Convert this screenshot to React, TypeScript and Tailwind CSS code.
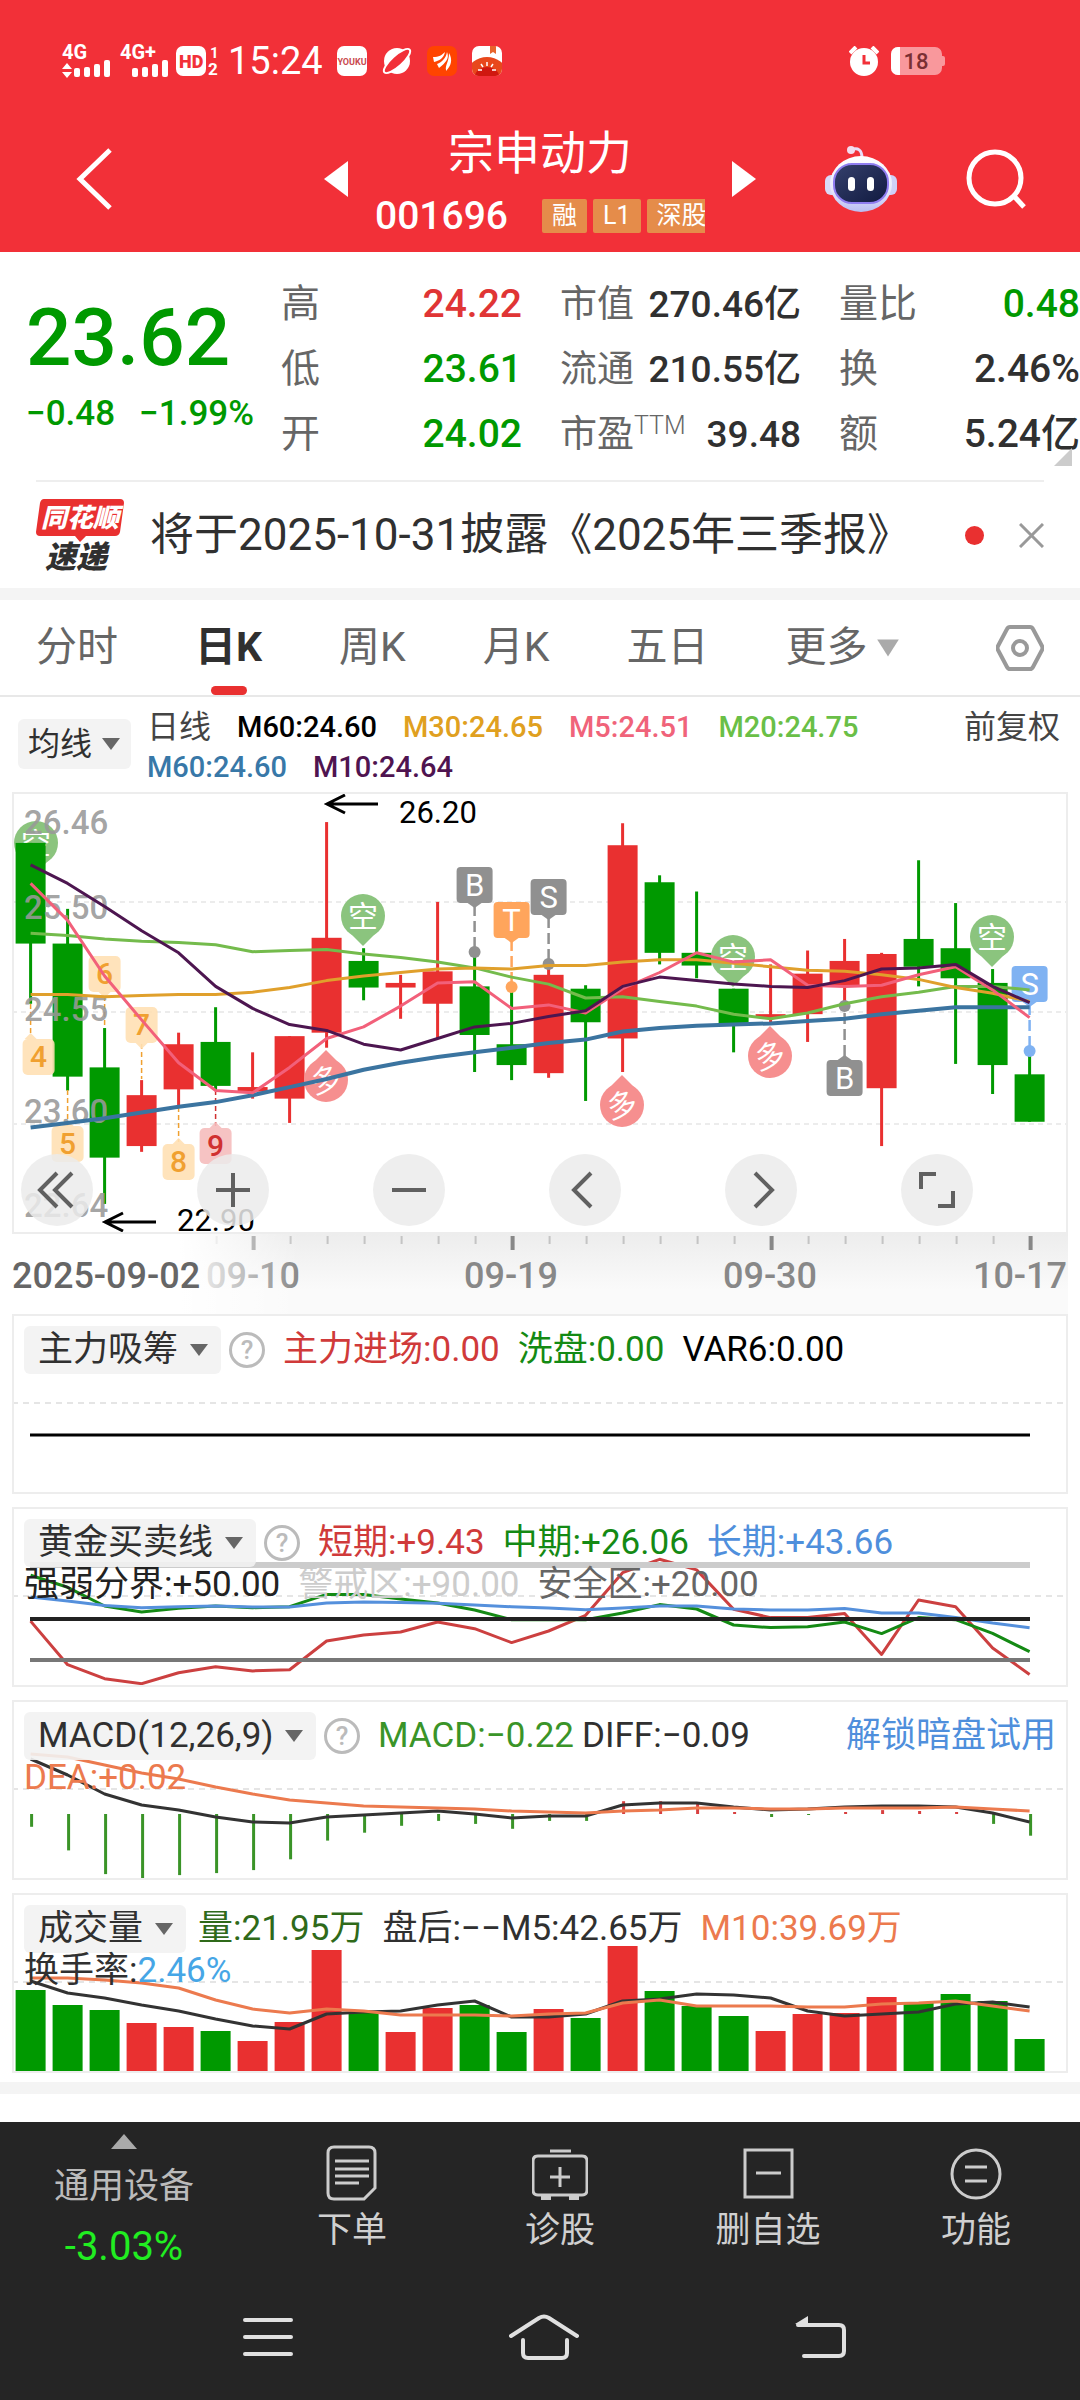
import { ReactNode, useState } from 'react'

const RED = '#e93030'
const GREEN = '#009900'

// [alta, topo do corpo, base do corpo, baixa, subiu]
type Candle = [number, number, number, number, boolean]

const candles: Candle[] = [
  [26.02, 26.02, 25.15, 24.63, false],
  [25.45, 25.15, 24.0, 23.88, false],
  [24.42, 24.08, 23.3, 22.9, false],
  [23.97, 23.84, 23.4, 23.35, true],
  [24.38, 24.28, 23.89, 23.75, true],
  [24.6, 24.3, 23.92, 23.88, false],
  [24.21, 23.91, 23.87, 23.81, true],
  [24.35, 24.35, 23.81, 23.6, true],
  [26.2, 25.2, 24.38, 24.25, true],
  [25.11, 25.0, 24.77, 24.66, false],
  [24.88, 24.81, 24.77, 24.5, true],
  [25.51, 24.91, 24.63, 24.33, true],
  [25.07, 24.78, 24.36, 24.04, false],
  [24.77, 24.28, 24.1, 23.97, false],
  [24.97, 24.88, 24.03, 23.99, true],
  [24.79, 24.76, 24.47, 23.79, false],
  [26.19, 26.0, 24.33, 24.04, true],
  [25.74, 25.68, 25.07, 24.97, false],
  [25.6, 25.07, 24.96, 24.85, false],
  [24.76, 24.76, 24.45, 24.21, false],
  [24.97, 24.54, 24.51, 24.47, true],
  [25.09, 24.89, 24.54, 24.3, true],
  [25.19, 25.0, 24.78, 24.6, true],
  [25.07, 25.06, 23.9, 23.4, true],
  [25.87, 25.19, 24.95, 24.78, false],
  [25.5, 25.11, 24.85, 24.11, false],
  [24.93, 24.81, 24.1, 23.85, false],
  [24.22, 24.02, 23.61, 23.61, false],
]

const ma5 = [25.67, 25.35, 24.87, 24.49, 24.12, 23.88, 23.86, 24.08, 24.33, 24.43, 24.61, 24.81, 24.82, 24.59, 24.62, 24.55, 24.76, 24.9, 25.07, 24.99, 25.01, 24.79, 24.78, 24.79, 24.88, 24.95, 24.75, 24.51]
const ma10 = [25.83, 25.67, 25.47, 25.26, 25.07, 24.78, 24.59, 24.45, 24.4, 24.28, 24.23, 24.33, 24.43, 24.46, 24.52, 24.57, 24.78, 24.86, 24.83, 24.8, 24.78, 24.77, 24.83, 24.93, 24.94, 24.97, 24.78, 24.64]
const ma20 = [25.24, 25.22, 25.19, 25.17, 25.16, 25.14, 25.08, 25.09, 25.1, 25.06, 25.03, 24.99, 24.94, 24.86, 24.8, 24.68, 24.69, 24.65, 24.61, 24.54, 24.5, 24.55, 24.63, 24.69, 24.73, 24.78, 24.78, 24.75]
const ma30 = [24.71, 24.71, 24.69, 24.7, 24.71, 24.71, 24.73, 24.77, 24.83, 24.87, 24.9, 24.93, 24.94, 24.93, 24.96, 24.96, 24.99, 25.01, 25.01, 24.98, 24.95, 24.92, 24.91, 24.88, 24.84, 24.77, 24.72, 24.65]
const ma60 = [23.56, 23.6, 23.64, 23.69, 23.74, 23.78, 23.84, 23.91, 23.98, 24.06, 24.12, 24.17, 24.21, 24.25, 24.29, 24.32, 24.39, 24.42, 24.44, 24.45, 24.46, 24.48, 24.5, 24.54, 24.57, 24.6, 24.6, 24.6]

const curto = [48.5, 16.6, 6.3, 2.7, 10.7, 15.1, 12, 12.9, 33.9, 38.3, 40.5, 47.8, 42.9, 32.7, 41.2, 52.7, 83.9, 93.7, 85.9, 57.1, 51, 51, 54.1, 24.1, 63.9, 59, 28.8, 9.43]
const medio = [82, 73.2, 59.5, 55.1, 57.8, 59.5, 58.3, 59, 68, 68, 64.6, 61.7, 56.6, 49.5, 49.5, 49.5, 54.4, 60.5, 57.3, 45.6, 43.7, 44.4, 47.8, 39.3, 51, 49.5, 39.5, 26.06]
const longo = [66.1, 63.2, 59.8, 58.3, 59, 59.5, 58.8, 58.8, 61.7, 62.4, 62, 61.5, 60.2, 59, 58, 56.8, 58, 59.5, 59.5, 57.3, 56.6, 56.6, 57.6, 54.4, 54.4, 51.2, 47.1, 43.66]

const macd = [-0.13, -0.37, -0.61, -0.66, -0.62, -0.6, -0.57, -0.46, -0.27, -0.19, -0.12, -0.07, -0.1, -0.15, -0.07, -0.07, 0.13, 0.13, 0.11, 0.02, -0.03, -0.01, 0.02, 0.04, 0.03, 0.02, -0.1, -0.22]
const diff = [59, 75, 94, 105, 110, 117, 122, 123, 117, 115, 113, 111, 114, 118, 116, 116, 105, 103, 103, 107, 110, 109, 107, 106, 106, 107, 113, 122]
const dea = [54, 57, 65, 73, 79, 87, 94, 100, 103, 106, 107, 108, 109, 111, 112, 113, 111, 110, 108, 108, 109, 109, 108, 108, 108, 107, 109, 111]

const volumes = [83, 68, 63, 50, 46, 42, 32, 51, 123, 61, 41, 65, 68, 41, 64, 55, 127, 82, 67, 57, 42, 59, 60, 76, 70, 79, 72, 34]
const volM5 = [88, 100, 105, 112, 118, 126, 133, 136, 121, 119, 118, 112, 108, 124, 124, 121, 108, 106, 101, 102, 105, 118, 123, 121, 119, 111, 109, 114]
const volM10 = [85, 85, 87, 90, 95, 107, 116, 120, 116, 118, 122, 122, 122, 123, 121, 120, 110, 107, 113, 113, 113, 114, 114, 111, 110, 108, 113, 118]

const px = (i: number) => 30.6 + i * 37
const priceY = (p: number) => ((26.46 - p) / 3.82) * 442
const levelY = (v: number) => 112 - (v - 50) * 1.367
const linha = (ys: number[]) => ys.map((y, i) => `${px(i)},${y.toFixed(1)}`).join(' ')

function Serie({ ys, cor, largura = 3 }: { ys: number[]; cor: string; largura?: number }) {
  return <polyline points={linha(ys)} fill="none" stroke={cor} strokeWidth={largura} strokeLinejoin="round" />
}

function Seta({ className = 'w-5 h-3.5 text-[#666]' }: { className?: string }) {
  return (
    <svg viewBox="0 0 20 14" preserveAspectRatio="none" className={`shrink-0 ${className}`} aria-hidden="true">
      <path d="M1 1h18l-9 12z" fill="currentColor" />
    </svg>
  )
}

/* ---------- barra de status ---------- */

function Sinal({ label, dados }: { label: string; dados?: boolean }) {
  return (
    <svg viewBox="0 0 48 34" className="w-12 h-[34px] overflow-visible" fill="#fff">
      <text x="0" y="15" fontSize="20" fontWeight="700">{label}</text>
      {dados && <path d="M0 25l5-6 5 6zM0 28l5 6 5-6z" />}
      <rect x="12" y="24" width="6" height="9" rx="2" />
      <rect x="22" y="23" width="6" height="10" rx="2" />
      <rect x="32" y="20" width="6" height="13" rx="2" />
      <rect x="42" y="16" width="6" height="17" rx="2" />
    </svg>
  )
}

function StatusBar() {
  return (
    <div className="h-[106px] pt-4 pl-[62px] pr-[135px] flex items-center text-white">
      <Sinal label="4G" dados />
      <div className="ml-2.5"><Sinal label="4G+" /></div>
      <svg viewBox="0 0 44 30" className="w-11 h-[30px] ml-2 overflow-visible" fill="#fff">
        <rect width="30" height="30" rx="7" />
        <text x="3" y="22" fontSize="18" fontWeight="900" fill="#f23038">HD</text>
        <text x="34" y="12" fontSize="15" fontWeight="700">1</text>
        <text x="32" y="29" fontSize="17" fontWeight="700">2</text>
      </svg>
      <span className="ml-2 text-[38px] leading-10">15:24</span>
      <svg viewBox="0 0 30 30" className="size-[30px] ml-3.5 overflow-visible">
        <rect width="30" height="30" rx="7" fill="#fff" />
        <text x="15" y="19" fontSize="9" fontWeight="700" textAnchor="middle" fill="#c94a50">YOUKU</text>
      </svg>
      <svg viewBox="0 0 30 30" className="size-[30px] ml-[15px]">
        <circle cx="15" cy="15" r="13" fill="#fff" />
        <ellipse cx="15" cy="15" rx="17" ry="5.5" transform="rotate(-42 15 15)" fill="#f23038" stroke="#fff" strokeWidth="2" />
      </svg>
      <svg viewBox="0 0 30 30" className="size-[30px] ml-[15px]">
        <rect width="30" height="30" rx="7" fill="#ff4400" />
        <path d="M6 11c6 0 9-2 12-5-1 6-6 9-11 10zM10 18c5-2 9-6 10-12 3 7-2 11-8 16zM19 24c-1-5 3-8 3-17 4 7 2 13-3 18z" fill="#fff" />
      </svg>
      <svg viewBox="0 0 30 30" className="size-[30px] ml-[15px]">
        <clipPath id="fruta"><rect width="30" height="30" rx="7" /></clipPath>
        <g clipPath="url(#fruta)">
          <rect width="30" height="30" fill="#fff" />
          <path d="M18 0h6v8l-3-2-3 2z" fill="#e8642c" />
          <ellipse cx="15" cy="26" rx="19" ry="15" fill="#e8481c" />
          <ellipse cx="15" cy="30" rx="12" ry="9" fill="#d01810" />
          <path d="M15 16v4M9 18l2 3M21 18l-2 3M6 24h4M24 24h-4" stroke="#fff" strokeWidth="1.5" />
        </g>
      </svg>
      <svg viewBox="0 0 30 30" className="size-[30px] ml-auto">
        <path d="M1 7l6-6M29 7l-6-6" stroke="#fff" strokeWidth="4" />
        <circle cx="15" cy="16" r="14" fill="#fff" />
        <path d="M15 9v8h6" fill="none" stroke="#f23038" strokeWidth="3" />
      </svg>
      <svg viewBox="0 0 54 28" className="w-[54px] h-7 ml-3">
        <path d="M7 0h37a7 7 0 0 1 7 7v2h1a2 2 0 0 1 2 2v6a2 2 0 0 1-2 2h-1v2a7 7 0 0 1-7 7H7a7 7 0 0 1-7-7V7a7 7 0 0 1 7-7z" fill="#f9989c" />
        <path d="M9 0H7a7 7 0 0 0-7 7v14a7 7 0 0 0 7 7h2z" fill="#fff" />
        <text x="25" y="22" fontSize="22" fontWeight="500" textAnchor="middle" fill="#7a2f33">18</text>
      </svg>
    </div>
  )
}

/* ---------- cabeçalho ---------- */

function Robo() {
  return (
    <svg viewBox="0 0 72 66" className="w-[72px] h-[66px]">
      <defs>
        <linearGradient id="casco" x1="0" y1="0" x2="0" y2="1">
          <stop offset="0" stopColor="#ffffff" />
          <stop offset="0.6" stopColor="#e8e8fb" />
          <stop offset="1" stopColor="#b9bdf2" />
        </linearGradient>
        <linearGradient id="visor" x1="0" y1="0" x2="1" y2="1">
          <stop offset="0" stopColor="#35406c" />
          <stop offset="1" stopColor="#111a40" />
        </linearGradient>
      </defs>
      <path d="M26 4c7-3 11 0 11 8" fill="none" stroke="#e9defa" strokeWidth="3" />
      <circle cx="26" cy="4" r="4" fill="#f3dcee" />
      <rect x="0" y="29" width="14" height="20" rx="6" fill="#d9daf8" />
      <rect x="58" y="29" width="14" height="20" rx="6" fill="#cfd0f8" />
      <ellipse cx="36" cy="38" rx="31" ry="28" fill="url(#casco)" />
      <rect x="9" y="18" width="54" height="39" rx="18" fill="url(#visor)" stroke="#8f7df0" strokeWidth="2" />
      <rect x="23" y="31" width="7" height="14" rx="3.5" fill="#fff" />
      <rect x="42" y="31" width="7" height="14" rx="3.5" fill="#fff" />
    </svg>
  )
}

function Tag({ children }: { children: ReactNode }) {
  return <span className="h-[34px] px-2.5 rounded-xs bg-[#e58c4a] text-[25px] leading-[34px] shrink-0">{children}</span>
}

function Header() {
  return (
    <header className="bg-[#f23038] text-white">
      <StatusBar />
      <div className="h-[146px] grid grid-cols-[3fr_4fr_3fr] items-center">
        <button aria-label="返回" className="pl-[75px] justify-self-start">
          <svg viewBox="0 0 38 64" className="w-[38px] h-16" fill="none" stroke="#fff" strokeWidth="5">
            <path d="M35 3L5 32l30 29" />
          </svg>
        </button>
        <div className="flex items-center justify-between">
          <button aria-label="上一只">
            <svg viewBox="0 0 24 36" className="w-6 h-9" fill="#fff"><path d="M24 0v36L0 18z" /></svg>
          </button>
          <div className="w-[330px]">
            <h1 className="text-center text-[46px] leading-[56px] mb-[18px]">宗申动力</h1>
            <div className="flex items-center gap-1.5 overflow-hidden h-[34px]">
              <span className="text-[39px] font-medium leading-[34px] mr-7">001696</span>
              <Tag>融</Tag>
              <Tag>L1</Tag>
              <Tag>深股</Tag>
            </div>
          </div>
          <button aria-label="下一只">
            <svg viewBox="0 0 24 36" className="w-6 h-9" fill="#fff"><path d="M0 0v36l24-18z" /></svg>
          </button>
        </div>
        <div className="flex items-center gap-[69px] pl-[69px]">
          <button aria-label="助手"><Robo /></button>
          <button aria-label="搜索">
            <svg viewBox="0 0 60 60" className="size-[60px]" fill="none" stroke="#fff" strokeWidth="5">
              <circle cx="29" cy="29" r="26" />
              <path d="M47 46l11 12" />
            </svg>
          </button>
        </div>
      </div>
    </header>
  )
}

/* ---------- cotação ---------- */

interface ItemProps {
  nome: ReactNode
  valor: string
  cor?: string
  tamanho?: string
}

function Item({ nome, valor, cor = 'text-[#303030]', tamanho = 'text-[39px]' }: ItemProps) {
  return (
    <div className={`flex items-center justify-between h-[65px] whitespace-nowrap ${tamanho}`}>
      <dt className="text-[#666]">{nome}</dt>
      <dd className={`font-medium ${cor}`}>{valor}</dd>
    </div>
  )
}

function Cotacao() {
  return (
    <section className="relative flex">
      <div className="w-[281px] pl-[26px] pt-[46px] text-[#009900] font-medium shrink-0">
        <p className="text-[80px] leading-[80px]">23.62</p>
        <p className="flex gap-6 text-[35px] leading-10 mt-4">
          <span>−0.48</span>
          <span>−1.99%</span>
        </p>
      </div>
      <dl className="flex-1 grid grid-cols-3 gap-x-[38px] pt-5 pb-[13px]">
        <Item nome="高" valor="24.22" cor="text-[#e03535]" />
        <Item nome="市值" valor="270.46亿" tamanho="text-[37px]" />
        <Item nome="量比" valor="0.48" cor="text-[#009900]" />
        <Item nome="低" valor="23.61" cor="text-[#009900]" />
        <Item nome="流通" valor="210.55亿" tamanho="text-[37px]" />
        <Item nome="换" valor="2.46%" />
        <Item nome="开" valor="24.02" cor="text-[#009900]" />
        <Item nome={<>市盈<sup className="text-[25px] font-light">TTM</sup></>} valor="39.48" tamanho="text-[37px]" />
        <Item nome="额" valor="5.24亿" />
      </dl>
      <svg viewBox="0 0 18 18" className="absolute right-2 bottom-3.5 size-[18px]"><path d="M18 0v18H0z" fill="#ccc" /></svg>
    </section>
  )
}

function Aviso() {
  return (
    <section className="mx-9 border-t-2 border-[#eee] h-[108px] flex items-center">
      <svg viewBox="0 0 90 72" className="w-[90px] h-[72px] overflow-visible">
        <path d="M8 0h76q4 0 4 4l-4 29q-1 4-5 4H50l-6 6-5-6H4q-4 0-4-4L4 4q1-4 4-4z" fill={RED} />
        <text x="5" y="28" fontSize="26" fontWeight="900" fontStyle="italic" fill="#fff">同花顺</text>
        <text x="9" y="69" fontSize="31" fontWeight="900" fontStyle="italic" fill="#303030">速递</text>
      </svg>
      <p className="ml-6 text-[44px] text-[#303030] whitespace-nowrap">将于2025-10-31披露《2025年三季报》</p>
      <i className="ml-auto size-[19px] rounded-full bg-[#e93030]" />
      <button aria-label="关闭" className="ml-[35px]">
        <svg viewBox="0 0 25 25" className="size-[25px]" stroke="#999" strokeWidth="3"><path d="M1 1l23 23M24 1L1 24" /></svg>
      </button>
    </section>
  )
}

const periodos = ['分时', '日K', '周K', '月K', '五日']

function Abas() {
  const [ativo, setAtivo] = useState('日K')
  return (
    <nav className="h-[97px] pl-9 pr-9 flex items-center gap-[77px] text-[41px] text-[#666] border-b-2 border-[#e8e8e8]">
      {periodos.map((p) => (
        <button
          key={p}
          onClick={() => setAtivo(p)}
          className={`relative h-full whitespace-nowrap ${ativo === p ? 'font-bold text-[#303030]' : ''}`}
        >
          {p}
          {ativo === p && (
            <i className="absolute bottom-0 left-1/2 -translate-x-1/2 w-9 h-[9px] rounded-full bg-[#e93030]" />
          )}
        </button>
      ))}
      <button className="flex items-center gap-2 whitespace-nowrap">
        更多
        <Seta className="w-6 h-5 text-[#aaa]" />
      </button>
      <button aria-label="设置" className="ml-auto">
        <svg viewBox="0 0 48 46" className="w-12 h-[46px]" fill="none" stroke="#999" strokeWidth="4">
          <path d="M14 2h20q2 0 3 2l9 17q1 2 0 4l-9 17q-1 2-3 2H14q-2 0-3-2L2 25q-1-2 0-4L11 4q1-2 3-2z" />
          <circle cx="24" cy="23" r="7" />
        </svg>
      </button>
    </nav>
  )
}

/* ---------- gráfico principal ---------- */

interface SeletorProps {
  nome: string
  className?: string
}

function Seletor({ nome, className = 'h-12 pl-3.5 pr-3 gap-2.5 text-[35px]' }: SeletorProps) {
  return (
    <label className={`flex items-center shrink-0 rounded-md bg-[#f2f2f2]/90 text-[#303030] ${className}`}>
      <select aria-label={nome} className="appearance-none bg-transparent">
        <option>{nome}</option>
      </select>
      <Seta />
    </label>
  )
}

function Medias() {
  return (
    <div className="flex items-start pl-[18px] pr-5 pt-2.5 pb-[5px]">
      <Seletor nome="均线" className="h-[50px] mt-3 px-2.5 gap-2 text-[32px]" />
      <div className="flex-1 ml-4 flex flex-wrap gap-x-[26px] text-[29px] leading-10 font-medium">
        <span className="text-[32px] font-normal text-[#444]">日线</span>
        <span className="text-black">M60:24.60</span>
        <span className="text-[#e0a020]">M30:24.65</span>
        <span className="text-[#f0637a]">M5:24.51</span>
        <span className="text-[#6abf47]">M20:24.75</span>
        <span className="basis-full h-0" />
        <span className="text-[#3878a8]">M60:24.60</span>
        <span className="text-[#4f1450]">M10:24.64</span>
      </div>
      <button className="text-[32px] leading-10 text-[#444]">前复权</button>
    </div>
  )
}

interface BalaoProps {
  x: number
  y: number
  tipo: '空' | '多'
}

function Balao({ x, y, tipo }: BalaoProps) {
  const cor = tipo === '空' ? '#8bc47e' : '#f68f8f'
  return (
    <g fill={cor}>
      <circle cx={x} cy={y} r="22" />
      {tipo === '空' ? <path d={`M${x - 12} ${y + 18}L${x} ${y + 30}l12-12z`} /> : <path d={`M${x - 12} ${y - 18}L${x} ${y - 30}l12 12z`} />}
      <text
        x={x}
        y={y + 11}
        fontSize="30"
        textAnchor="middle"
        fill="#fff"
        transform={tipo === '多' ? `rotate(-14 ${x} ${y})` : undefined}
      >
        {tipo}
      </text>
    </g>
  )
}

// contagem sequencial: caixa numerada ligada ao candle
const contagem = [
  { n: '4', i: 0, dx: 8, y: 247, de: 212, ate: 244, cima: true },
  { n: '5', i: 1, dx: 0, y: 334, de: 298, ate: 334, cima: true },
  { n: '6', i: 2, dx: 0, y: 164, de: 204, ate: 236, cima: false },
  { n: '7', i: 3, dx: 0, y: 215, de: 252, ate: 287, cima: false },
  { n: '8', i: 4, dx: 0, y: 352, de: 315, ate: 350, cima: true },
  { n: '9', i: 5, dx: 0, y: 336, de: 298, ate: 334, cima: true },
]

const marcas = [
  { t: 'B', i: 12, y: 75, ponto: 160, cor: '#909090' },
  { t: 'T', i: 13, y: 110, ponto: 195, cor: '#ffa55c' },
  { t: 'S', i: 14, y: 87, ponto: 172, cor: '#909090' },
  { t: 'B', i: 22, y: 268, ponto: 214, cor: '#909090' },
  { t: 'S', i: 27, y: 174, ponto: 259, cor: '#7fb2f2' },
]

const escala: [string, number][] = [
  ['26.46', 42],
  ['25.50', 127],
  ['24.55', 229],
  ['23.60', 331],
  ['22.64', 425],
]

function Controle({ nome, children }: { nome: string; children: ReactNode }) {
  return (
    <button aria-label={nome} className="size-[72px] rounded-full bg-[#ebebeb]/85 flex items-center justify-center">
      <svg viewBox="0 0 40 40" className="size-10" fill="none" stroke="#606060" strokeWidth="4">
        {children}
      </svg>
    </button>
  )
}

function GraficoK() {
  return (
    <div className="mx-3 border-2 border-[#ededed] grid">
      <svg viewBox="14 2 1052 438" className="w-full h-auto [grid-area:1/1]">
        {[110, 220, 332].map((y) => (
          <path key={y} d={`M12 ${y}h1056`} stroke="#ececec" strokeWidth="2" strokeDasharray="5 4" />
        ))}
        <Balao x={36} y={51} tipo="空" />
        {candles.map(([alta, topo, base, baixa, subiu], i) => (
          <g key={i} fill={subiu ? RED : GREEN}>
            <rect x={px(i) - 1.5} y={priceY(alta)} width="3" height={priceY(baixa) - priceY(alta)} />
            <rect x={px(i) - 15} y={priceY(topo)} width="30" height={priceY(base) - priceY(topo)} />
          </g>
        ))}
        <Balao x={363} y={124} tipo="空" />
        <Balao x={733} y={165} tipo="空" />
        <Balao x={992} y={145} tipo="空" />
        <Balao x={326} y={288} tipo="多" />
        <Balao x={622} y={313} tipo="多" />
        <Balao x={770} y={264} tipo="多" />

        {contagem.map(({ n, i, dx, y, de, ate, cima }) => {
          const x = px(i)
          const cor = n === '9' ? '#d03030' : '#f0a030'
          const fundo = n === '9' ? '#f5bcbc' : '#ffe0b4'
          return (
            <g key={n}>
              <path d={`M${x} ${de}V${ate}`} stroke={cor} strokeWidth="1.5" strokeDasharray="5 3" />
              <g fill={fundo} fillOpacity="0.9">
                <rect x={x + dx - 16} y={y} width="32" height="36" rx="5" />
                <path d={cima ? `M${x - 6} ${y}l6-6 6 6z` : `M${x - 6} ${y + 36}l6 6 6-6z`} />
              </g>
              <text x={x + dx} y={y + 28} fontSize="30" fontWeight="500" textAnchor="middle" fill={cor}>{n}</text>
            </g>
          )
        })}

        {marcas.map(({ t, i, y, ponto, cor }) => {
          const x = px(i)
          const abaixo = y > ponto
          return (
            <g key={i} fill={cor}>
              <path d={`M${x} ${abaixo ? y - 4 : y + 38}V${ponto}`} stroke={cor} strokeWidth="2.5" strokeDasharray="11 5" />
              <rect x={x - 18} y={y} width="36" height="36" rx="4" />
              <path d={abaixo ? `M${x - 7} ${y}l7-5 7 5z` : `M${x - 7} ${y + 36}l7 5 7-5z`} />
              <circle cx={x} cy={ponto} r="6" />
              <text x={x} y={y + 29} fontSize="31" textAnchor="middle" fill="#fff">{t}</text>
            </g>
          )
        })}

        {escala.map(([t, y]) => (
          <text key={t} x="24" y={y} fontSize="33" fontWeight="500" fill="#999" fillOpacity="0.9">{t}</text>
        ))}

        <Serie ys={ma20.map(priceY)} cor="#74bb4c" />
        <Serie ys={ma30.map(priceY)} cor="#e0a02c" />
        <Serie ys={ma60.map(priceY)} cor="#3b74a0" largura={4} />
        <Serie ys={ma5.map(priceY)} cor="#f2607a" />
        <Serie ys={ma10.map(priceY)} cor="#4d1650" />

        <g fill="none" stroke="#000" strokeWidth="3">
          <path d="M378 12h-51M345 3l-18 9 18 9" />
          <path d="M156 430h-51M123 421l-18 9 18 9" />
        </g>
        <text x="399" y="31" fontSize="31">26.20</text>
        <text x="177" y="439" fontSize="31">22.90</text>
      </svg>
      <div className="[grid-area:1/1] self-end flex justify-between pl-[7px] pr-[93px] pb-1.5">
        <Controle nome="最早"><path d="M20 3L3 20l17 17M35 3L18 20l17 17" /></Controle>
        <Controle nome="放大"><path d="M20 3v34M3 20h34" /></Controle>
        <Controle nome="缩小"><path d="M3 20h34" /></Controle>
        <Controle nome="左移"><path d="M26 3L9 20l17 17" /></Controle>
        <Controle nome="右移"><path d="M14 3l17 17-17 17" /></Controle>
        <Controle nome="全屏"><path d="M4 19V4h15M21 36h15V21" /></Controle>
      </div>
    </div>
  )
}

function EixoDatas() {
  return (
    <svg viewBox="0 0 1080 80" className="block w-full h-auto">
      <defs>
        <linearGradient id="sombra" x1="0" y1="0" x2="0" y2="1">
          <stop offset="0" stopColor="#ededed" />
          <stop offset="0.7" stopColor="#fafafa" />
          <stop offset="1" stopColor="#fafafa" />
        </linearGradient>
        <linearGradient id="veu">
          <stop offset="0.6" stopColor="#fff" />
          <stop offset="1" stopColor="#fff" stopOpacity="0" />
        </linearGradient>
      </defs>
      <rect x="12" width="1056" height="80" fill="url(#sombra)" />
      {candles.map((_, i) => {
        if (i < 5) return null
        const maior = i % 7 === 6
        return <rect key={i} x={px(i) - (maior ? 1 : 0)} y="2" width={maior ? 4 : 2} height={maior ? 14 : 8} fill={maior ? '#888' : '#c4c4c4'} />
      })}
      <g fontSize="36" fill="#888" textAnchor="middle" fontWeight="500">
        <text x="253" y="54">09-10</text>
        <text x="511" y="54">09-19</text>
        <text x="770" y="54">09-30</text>
        <text x="1067" y="54" textAnchor="end">10-17</text>
      </g>
      <rect width="300" height="80" fill="url(#veu)" />
      <text x="12" y="54" fontSize="36" fontWeight="500" fill="#666">2025-09-02</text>
    </svg>
  )
}

/* ---------- indicadores ---------- */

interface PainelProps {
  nome: string
  ajuda?: boolean
  legenda: ReactNode
  segunda?: ReactNode
  children: ReactNode
}

function Painel({ nome, ajuda = true, legenda, segunda, children }: PainelProps) {
  return (
    <section className="mx-3 border-2 border-[#ededed] grid">
      <svg viewBox="14 2 1052 176" className="w-full h-auto [grid-area:1/1]">
        <path d="M12 89h1056" stroke="#ddd" strokeWidth="1.5" strokeDasharray="6 5" />
        {children}
      </svg>
      <div className="[grid-area:1/1] min-w-0 pt-2.5 px-2.5 text-[35px] whitespace-nowrap">
        <div className="flex items-center h-12">
          <Seletor nome={nome} />
          {ajuda && (
            <button className="ml-2 size-9 rounded-full border-[3px] border-[#bbb] text-[#bbb] text-[26px] leading-7 font-medium shrink-0">?</button>
          )}
          {legenda}
        </div>
        {segunda && <div className="flex gap-[18px] leading-9">{segunda}</div>}
      </div>
    </section>
  )
}

function Nivel({ y, cor, largura = 4 }: { y: number; cor: string; largura?: number }) {
  return <path d={`M30 ${y}H1030`} stroke={cor} strokeWidth={largura} />
}

function Indicadores() {
  return (
    <div className="flex flex-col gap-[13px]">
      <Painel
        nome="主力吸筹"
        legenda={
          <div className="flex gap-[18px] ml-[18px]">
            <span className="text-[#d03a3a]">主力进场:0.00</span>
            <span className="text-[#148a14]">洗盘:0.00</span>
            <span className="text-black">VAR6:0.00</span>
          </div>
        }
      >
        <Nivel y={121} cor="#000" largura={3} />
      </Painel>

      <Painel
        nome="黄金买卖线"
        legenda={
          <div className="flex gap-[18px] ml-[18px]">
            <span className="text-[#d03a3a]">短期:+9.43</span>
            <span className="text-[#148a14]">中期:+26.06</span>
            <span className="text-[#4f8fdc]">长期:+43.66</span>
          </div>
        }
        segunda={
          <>
            <span className="text-[#222]">强弱分界:+50.00</span>
            <span className="text-[#ccc]">警戒区:+90.00</span>
            <span className="text-[#666]">安全区:+20.00</span>
          </>
        }
      >
        <Serie ys={curto.map(levelY)} cor="#cc4040" />
        <Serie ys={medio.map(levelY)} cor="#148a14" />
        <Serie ys={longo.map(levelY)} cor="#5590dc" />
        <Nivel y={112} cor="#222" />
        <Nivel y={58} cor="#ccc" largura={6} />
        <Nivel y={153} cor="#777" />
      </Painel>

      <Painel
        nome="MACD(12,26,9)"
        legenda={
          <>
            <div className="flex gap-2 ml-[18px]">
              <span className="text-[#3a9428]">MACD:−0.22</span>
              <span className="text-[#303030]">DIFF:−0.09</span>
            </div>
            <a href="#unlock" className="ml-auto text-[#4f8fdc]">解锁暗盘试用</a>
          </>
        }
        segunda={<span className="text-[#ec7a4e]">DEA:+0.02</span>}
      >
        {macd.map((v, i) => (
          <path key={i} d={`M${px(i) + 1} 114v${(-v * 98.5).toFixed(1)}`} stroke={v > 0 ? '#d84040' : '#3a9428'} strokeWidth="3" />
        ))}
        <Serie ys={diff} cor="#333" />
        <Serie ys={dea} cor="#ec7a4e" />
      </Painel>

      <Painel
        nome="成交量"
        ajuda={false}
        legenda={
          <div className="flex gap-[18px] ml-3">
            <span className="text-[#2f6a1a]">量:21.95万</span>
            <span className="text-[#303030]">盘后:−−M5:42.65万</span>
            <span className="text-[#ec7a4e]">M10:39.69万</span>
          </div>
        }
        segunda={<span className="text-[#303030]">换手率:<span className="text-[#46a6e6]">2.46%</span></span>}
      >
        {volumes.map((h, i) => (
          <rect key={i} x={px(i) - 15} y={180 - h} width="30" height={h} fill={candles[i][4] ? RED : GREEN} />
        ))}
        <Serie ys={volM5} cor="#333" />
        <Serie ys={volM10} cor="#ec7a4e" />
      </Painel>
    </div>
  )
}

/* ---------- rodapé ---------- */

function Acao({ nome, children }: { nome: string; children: ReactNode }) {
  return (
    <button className="flex-1 flex flex-col items-center pt-[23px]">
      <svg viewBox="0 0 56 56" className="size-14" fill="none" stroke="#ccc" strokeWidth="3">
        {children}
      </svg>
      <span className="mt-2.5 text-[35px] leading-10">{nome}</span>
    </button>
  )
}

function Rodape() {
  return (
    <footer className="bg-[#252525] text-[#d0d0d0]">
      <div className="flex items-start h-[159px]">
        <button className="w-[248px] flex flex-col items-center pt-3">
          <svg viewBox="0 0 26 15" className="w-[26px] h-[15px]"><path d="M13 0l13 15H0z" fill="#aaa" /></svg>
          <span className="mt-[18px] text-[35px] leading-10 text-[#bbb]">通用设备</span>
          <span className="mt-5 text-[40px] leading-10 text-[#21ee21]">-3.03%</span>
        </button>
        <Acao nome="下单">
          <path d="M10 2h35q6 0 6 6v35L40 54H10q-6 0-6-6V8q0-6 6-6zM11 16h34M11 24h34M11 31h34M11 38h24" />
        </Acao>
        <Acao nome="诊股">
          <path d="M18 6h21M6 11h44q5 0 5 5v29q0 5-5 5H6q-5 0-5-5V16q0-5 5-5zM28 22v20M18 32h20" />
          <path d="M9 53h10M37 53h10" strokeWidth="4" />
        </Acao>
        <Acao nome="删自选">
          <path d="M5 5h47v47H5zM16 28h25" />
        </Acao>
        <Acao nome="功能">
          <circle cx="28" cy="29" r="24" />
          <path d="M17 22h22M17 36h22" />
        </Acao>
      </div>
      <div className="flex items-center justify-between h-[120px] pb-2 pl-[242px] pr-[234px]">
        <button aria-label="最近任务">
          <svg viewBox="0 0 52 42" className="w-[52px] h-[42px]" stroke="#e0e0e0" strokeWidth="4" strokeLinecap="round">
            <path d="M3 4h46M3 21h46M3 38h46" />
          </svg>
        </button>
        <button aria-label="主页">
          <svg viewBox="0 0 70 46" className="w-[70px] h-[46px]" fill="none" stroke="#e0e0e0" strokeWidth="4" strokeLinecap="round">
            <path d="M2 22L30 4q5-3 10 0l28 18M14 26v13q0 5 5 5h34q5 0 5-5V26" />
          </svg>
        </button>
        <button aria-label="后退">
          <svg viewBox="0 0 52 44" className="w-[52px] h-11" fill="none" stroke="#e0e0e0" strokeWidth="4" strokeLinecap="round">
            <path d="M4 10h41q5 0 5 5v21q0 5-5 5H10" />
            <path d="M1 9L14 1v9z" fill="#e0e0e0" stroke="none" />
          </svg>
        </button>
      </div>
    </footer>
  )
}

export default function App() {
  return (
    <div className="min-h-screen overflow-x-hidden bg-white font-['Roboto','Noto_Sans_CJK_SC',sans-serif]">
      <Header />
      <main>
        <Cotacao />
        <Aviso />
        <div className="h-3 bg-[#f4f4f4]" />
        <Abas />
        <Medias />
        <GraficoK />
        <EixoDatas />
        <Indicadores />
        <div className="h-3 mt-[9px] mb-7 bg-[#f4f4f4]" />
      </main>
      <Rodape />
    </div>
  )
}
